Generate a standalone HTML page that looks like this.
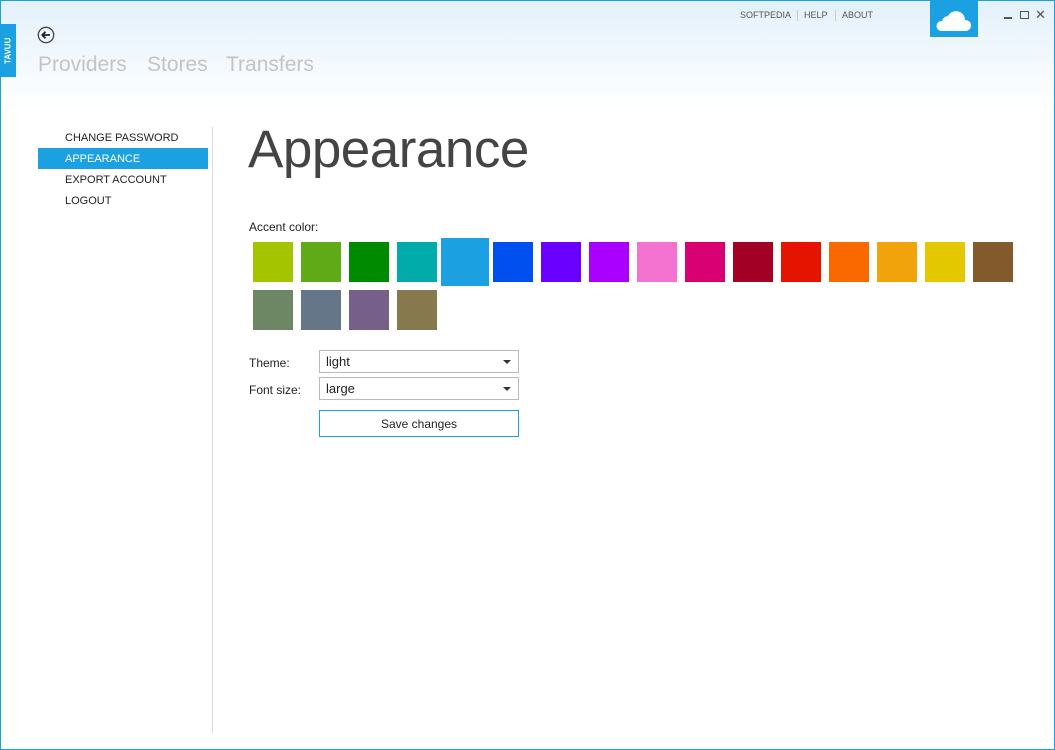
<!DOCTYPE html>
<html><head><style>
*{margin:0;padding:0;box-sizing:border-box}
body{width:1055px;height:750px;overflow:hidden;font-family:"Liberation Sans",sans-serif;background:#fff;position:relative}
.bg{position:absolute;inset:0;background:linear-gradient(#e3f1fb 0,#fff 110px,#fff)}
.frame{position:absolute;inset:0;border:1px solid #1ba1e2;pointer-events:none}
.a{position:absolute}
.tab{left:0;top:24px;width:16px;height:53px;background:#1ba1e2;color:#fff;font-size:8px;font-weight:bold;writing-mode:vertical-rl;transform:rotate(180deg);display:flex;align-items:center;justify-content:center}
.nav{top:53px;font-size:21px;color:#c4c4c4}
.top{top:10px;font-size:9px;color:#555}
.menu{left:38px;width:170px;height:21px;font-size:11px;color:#222;padding-left:27px;line-height:22px}
.sw{width:40px;height:40px}
.sel{border:1px solid #bbb;height:23px;width:200px;font-size:13px;color:#222;padding-left:6px;line-height:22px}
.sel:after{content:"";position:absolute;right:7px;top:9px;border:4px solid transparent;border-top:4px solid #333;border-bottom:0}
</style></head><body><div class="bg"></div>
<div class="a tab">TAVUU</div>
<svg class="a" style="left:37px;top:26px" width="18" height="18"><circle cx="9" cy="9" r="7.7" fill="none" stroke="#444" stroke-width="1.3"/><path d="M13 9H5.5M8.5 5.8L5.3 9l3.2 3.2" fill="none" stroke="#222" stroke-width="1.8"/></svg>
<div class="a nav" style="left:38px">Providers</div>
<div class="a nav" style="left:147px">Stores</div>
<div class="a nav" style="left:226px">Transfers</div>
<div class="a top" style="left:740px">SOFTPEDIA</div>
<div class="a" style="left:797px;top:10px;width:1px;height:11px;background:#ccc"></div>
<div class="a top" style="left:804px">HELP</div>
<div class="a" style="left:835px;top:10px;width:1px;height:11px;background:#ccc"></div>
<div class="a top" style="left:842px">ABOUT</div>
<div class="a" style="left:930px;top:0;width:48px;height:37px;background:#1ba1e2"><svg width="48" height="37"><path d="M11 31a5 5 0 0 1 1-10a7 7 0 0 1 6-5a9 9 0 0 1 17 4a5.5 5.5 0 0 1 1 11z" fill="#fff"/></svg></div>
<div class="a" style="left:1004px;top:17px;width:8px;height:2px;background:#555"></div>
<div class="a" style="left:1020px;top:11px;width:9px;height:8px;border:1.5px solid #555"></div>
<div class="a" style="left:1035px;top:7px;font-size:13px;color:#555">✕</div>
<div class="a menu" style="top:127px">CHANGE PASSWORD</div>
<div class="a menu" style="top:148px;background:#1ba1e2;color:#fff">APPEARANCE</div>
<div class="a menu" style="top:169px">EXPORT ACCOUNT</div>
<div class="a menu" style="top:190px">LOGOUT</div>
<div class="a" style="left:212px;top:127px;width:1px;height:606px;background:#ddd"></div>
<div class="a" style="left:248px;top:119px;font-size:53px;color:#444;letter-spacing:-0.5px">Appearance</div>
<div class="a" style="left:249px;top:220px;font-size:12px;color:#222">Accent color:</div>
<div class="a sw" style="left:253px;top:242px;background:#a4c400"></div>
<div class="a sw" style="left:301px;top:242px;background:#60a917"></div>
<div class="a sw" style="left:349px;top:242px;background:#008a00"></div>
<div class="a sw" style="left:397px;top:242px;background:#00aba9"></div>
<div class="a" style="left:441px;top:238px;width:48px;height:48px;background:#1ba1e2"></div>
<div class="a sw" style="left:493px;top:242px;background:#0050ef"></div>
<div class="a sw" style="left:541px;top:242px;background:#6a00ff"></div>
<div class="a sw" style="left:589px;top:242px;background:#aa00ff"></div>
<div class="a sw" style="left:637px;top:242px;background:#f472d0"></div>
<div class="a sw" style="left:685px;top:242px;background:#d80073"></div>
<div class="a sw" style="left:733px;top:242px;background:#a20025"></div>
<div class="a sw" style="left:781px;top:242px;background:#e51400"></div>
<div class="a sw" style="left:829px;top:242px;background:#fa6800"></div>
<div class="a sw" style="left:877px;top:242px;background:#f0a30a"></div>
<div class="a sw" style="left:925px;top:242px;background:#e3c800"></div>
<div class="a sw" style="left:973px;top:242px;background:#825a2c"></div>
<div class="a sw" style="left:253px;top:290px;background:#6d8764"></div>
<div class="a sw" style="left:301px;top:290px;background:#647687"></div>
<div class="a sw" style="left:349px;top:290px;background:#76608a"></div>
<div class="a sw" style="left:397px;top:290px;background:#87794e"></div>
<div class="a" style="left:249px;top:356px;font-size:12px;color:#222">Theme:</div>
<div class="a" style="left:249px;top:383px;font-size:12px;color:#222">Font size:</div>
<div class="a sel" style="left:319px;top:350px">light</div>
<div class="a sel" style="left:319px;top:377px">large</div>
<div class="a" style="left:319px;top:410px;width:200px;height:27px;border:1px solid #1ba1e2;font-size:12px;color:#222;text-align:center;line-height:26px">Save changes</div>
<div class="frame"></div>
</body></html>
